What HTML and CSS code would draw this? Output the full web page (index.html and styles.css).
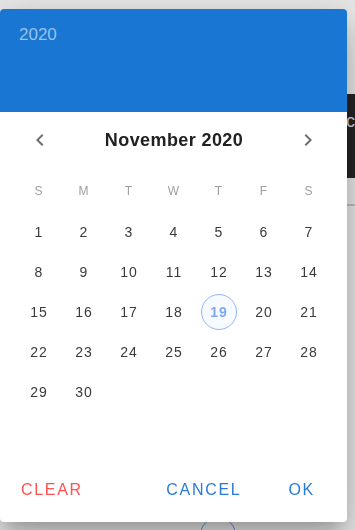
FILE: index.html
```html
<!DOCTYPE html>
<html lang="en">
<head>
  <meta charset="UTF-8"/>
  <meta name="viewport" content="width=device-width, initial-scale=1.0"/>
  <title>Date picker</title>
  <link rel="stylesheet" href="styles.css">
</head>
<body>
  <div class="page">
    <div class="page-bar"><span>.c</span></div>
    <div class="page-rule"></div>
    <div class="page-day"></div>
  </div>

  <div class="backdrop"></div>

  <div class="dialog">
    <div class="dialog-header">
      <span class="year">2020</span>
    </div>

    <div class="calendar">
      <div class="month-row">
        <button class="nav-btn">
          <svg viewBox="0 0 24 24" width="24" height="24"><path d="M15.41 7.41L14 6l-6 6 6 6 1.41-1.41L10.83 12z"/></svg>
        </button>
        <h3>November 2020</h3>
        <button class="nav-btn">
          <svg viewBox="0 0 24 24" width="24" height="24"><path d="M10 6L8.59 7.41 13.17 12l-4.58 4.59L10 18l6-6z"/></svg>
        </button>
      </div>

      <div class="weekdays">
        <span>S</span><span>M</span><span>T</span><span>W</span><span>T</span><span>F</span><span>S</span>
      </div>

      <div class="days" id="days"></div>
    </div>

    <div class="actions">
      <button class="btn clear">Clear</button>
      <button class="btn cancel">Cancel</button>
      <button class="btn ok">OK</button>
    </div>
  </div>

  <script>
    const days = document.getElementById('days');
    for (let d = 1; d <= 30; d++) {
      const cell = document.createElement('div');
      cell.className = 'day';
      const inner = document.createElement('span');
      inner.textContent = d;
      if (d === 19) inner.className = 'selected';
      cell.appendChild(inner);
      days.appendChild(cell);
    }
  </script>
</body>
</html>
```

FILE: styles.css
```css
* { box-sizing: border-box; margin: 0; padding: 0; }

body {
  width: 355px;
  height: 530px;
  overflow: hidden;
  font-family: 'Liberation Sans', Arial, sans-serif;
  background: #f1f1f1;
}

/* page content sitting behind the dialog */
.page {
  display: flex;
  flex-direction: column;
}

.page-bar {
  margin-top: 94px;
  height: 84px;
  background: #262626;
  color: #ddd;
  display: flex;
  justify-content: flex-end;
  align-items: center;
  padding-bottom: 30px;
  font-size: 18px;
}

.page-bar span { margin-right: 0; }

.page-rule {
  margin-top: 26px;
  height: 2px;
  background: #c4c4c4;
}

.page-day {
  margin-top: 311px;
  margin-left: 200px;
  width: 36px;
  height: 36px;
  border: 1px solid #6a93d0;
  border-radius: 50%;
}

.backdrop {
  position: fixed;
  inset: 0;
  background: rgba(0, 0, 0, 0.04);
}

.dialog {
  position: fixed;
  left: 0;
  top: 9px;
  width: 347px;
  height: 513px;
  background: #fff;
  border-radius: 4px;
  overflow: hidden;
  display: flex;
  flex-direction: column;
  box-shadow: 0 11px 15px -7px rgba(0,0,0,0.2),
              0 24px 38px 3px rgba(0,0,0,0.14),
              0 9px 46px 8px rgba(0,0,0,0.12);
}

.dialog-header {
  height: 103px;
  background: #1976d2;
  padding: 14px 19px;
}

.year {
  font-size: 17px;
  line-height: 24px;
  color: rgba(255, 255, 255, 0.56);
}

.calendar {
  flex: 1;
  padding: 4px 16px 0;
}

.month-row {
  height: 48px;
  display: flex;
  align-items: center;
  justify-content: space-between;
  padding: 0 11px 0 12px;
}

.month-row h3 {
  font-size: 18px;
  font-weight: 700;
  color: #212121;
  letter-spacing: 0.4px;
}

.nav-btn {
  border: none;
  background: none;
  width: 24px;
  height: 24px;
  display: flex;
}

.nav-btn svg { fill: #6f6f6f; }

.weekdays {
  margin-top: 17px;
  display: grid;
  grid-template-columns: repeat(7, 45px);
  height: 20px;
  align-items: center;
}

.weekdays span {
  text-align: center;
  font-size: 12px;
  color: #9e9e9e;
}

.days {
  margin-top: 11px;
  display: grid;
  grid-template-columns: repeat(7, 45px);
  grid-auto-rows: 40px;
}

.day {
  display: flex;
  align-items: center;
  justify-content: center;
}

.day span {
  width: 36px;
  height: 36px;
  display: flex;
  align-items: center;
  justify-content: center;
  font-size: 14px;
  letter-spacing: 1px;
  padding-left: 1px;
  color: #3a3a3a;
  border-radius: 50%;
}

.day span.selected {
  border: 1px solid #8fb4f7;
  background: #f7faff;
  color: #7ea8f4;
  font-weight: 700;
}

.actions {
  height: 50px;
  margin-bottom: 7px;
  display: flex;
  align-items: center;
  padding: 0 32px 0 21px;
}

.btn {
  border: none;
  background: none;
  font-family: inherit;
  font-size: 16px;
  letter-spacing: 1.7px;
  text-transform: uppercase;
  cursor: pointer;
}

.clear { color: #ff5252; }
.cancel { color: #2a7bd6; margin-left: auto; }
.ok { color: #2a7bd6; margin-left: 47px; }
```
